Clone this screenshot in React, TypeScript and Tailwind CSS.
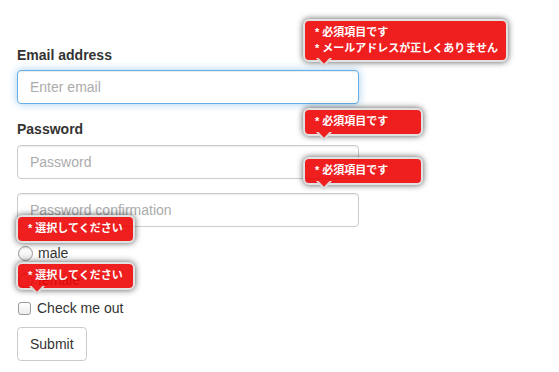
import React from "react";

const jp = "font-['Liberation_Sans','Noto_Sans_CJK_JP',sans-serif]";

function Tip({
  top,
  left,
  width,
  lines,
  arrow = true,
}: {
  top: number;
  left: number;
  width: number;
  lines: string[];
  arrow?: boolean;
}) {
  return (
    <div className="absolute opacity-[0.88]" style={{ top, left, width }}>
      <div
        className={`relative rounded-[6px] border-2 border-[#ddd] bg-[#ee0101] px-[10px] py-[4px] text-[11px] font-bold leading-[15.5px] text-white whitespace-nowrap shadow-[0_0_6px_rgba(0,0,0,0.75)] ${jp}`}
      >
        {lines.map((l, i) => (
          <div key={i}>{l}</div>
        ))}
        {arrow && (
          <svg
            className="absolute left-[10px] top-full -mt-[2px]"
            width="18"
            height="10"
            viewBox="0 0 18 10"
          >
            <polygon points="1,0 17,0 9,9" fill="#d4d4d4" />
            <polygon points="3.5,0 14.5,0 9,5.8" fill="#ee0101" />
          </svg>
        )}
      </div>
    </div>
  );
}

function Radio({ label }: { label: string }) {
  return (
    <label className="flex h-[20px] items-center gap-[5px]">
      <span className="ml-[1px] inline-block h-[15px] w-[15px] rounded-full border border-[#9a9a9a] bg-[linear-gradient(#fff,#ececec)] shadow-[inset_0_1px_1px_rgba(0,0,0,0.1)]" />
      <span>{label}</span>
    </label>
  );
}

export default function App() {
  return (
    <div
      className={`relative h-[372px] w-[559px] overflow-hidden bg-white text-[14px] leading-[20px] text-[#333] ${jp}`}
    >
      <form className="flex flex-col pl-[17px] pt-[45px]">
        <div className="mb-[15px] flex flex-col">
          <label className="mb-[5px] font-bold">Email address</label>
          <div className="flex h-[34px] w-[342px] items-center rounded-[4px] border border-[#66afe9] bg-white px-[12px] text-[#acacac] shadow-[inset_0_1px_1px_rgba(0,0,0,0.075),0_0_8px_rgba(102,175,233,0.6)]">
            Enter email
          </div>
        </div>
        <div className="mb-[14px] flex flex-col">
          <label className="mb-[6px] font-bold">Password</label>
          <div className="flex h-[34px] w-[342px] items-center rounded-[4px] border border-[#ccc] bg-white px-[12px] text-[#acacac] shadow-[inset_0_1px_1px_rgba(0,0,0,0.075)]">
            Password
          </div>
        </div>
        <div className="mb-[16px] flex flex-col">
          <div className="flex h-[34px] w-[342px] items-center rounded-[4px] border border-[#ccc] bg-white px-[12px] text-[#acacac] shadow-[inset_0_1px_1px_rgba(0,0,0,0.075)]">
            Password confirmation
          </div>
        </div>
        <div className="flex flex-col gap-[7px]">
          <Radio label="male" />
          <Radio label="female" />
        </div>
        <label className="mt-[8px] flex h-[20px] items-center gap-[6px]">
          <span className="ml-[1px] inline-block h-[13px] w-[13px] rounded-[3px] border border-[#9a9a9a] bg-[linear-gradient(#fff,#ececec)]" />
          <span>Check me out</span>
        </label>
        <div className="mt-[9px]">
          <button
            type="button"
            className="h-[34px] rounded-[4px] border border-[#ccc] bg-white px-[12px] text-[14px] text-[#333]"
          >
            Submit
          </button>
        </div>
      </form>

      <Tip
        top={19}
        left={303}
        width={205}
        lines={["* 必須項目です", "* メールアドレスが正しくありません"]}
      />
      <Tip top={108} left={303} width={120} lines={["* 必須項目です"]} />
      <Tip top={157} left={303} width={120} lines={["* 必須項目です"]} />
      <Tip top={215} left={16} width={119} lines={["* 選択してください"]} arrow={false} />
      <Tip top={262} left={16} width={119} lines={["* 選択してください"]} />
    </div>
  );
}
